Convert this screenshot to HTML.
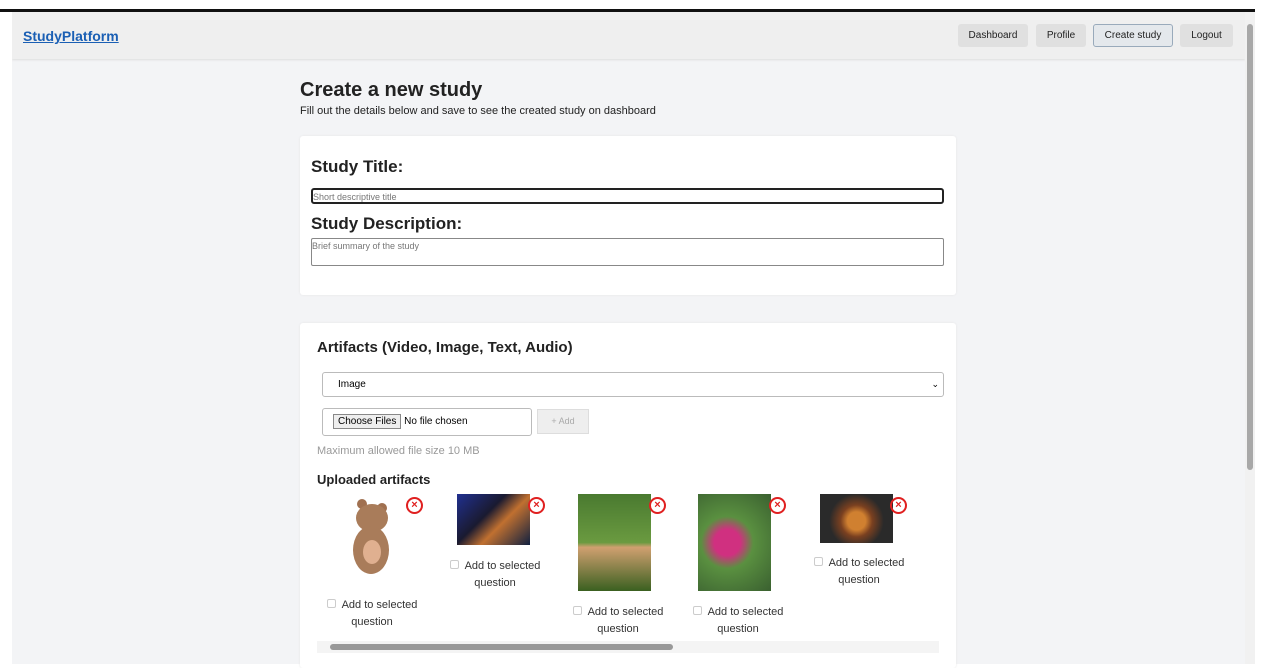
<!DOCTYPE html>
<html><head><style>
*{box-sizing:border-box;margin:0;padding:0}
body{width:1278px;height:668px;background:#fff;font-family:"Liberation Sans",sans-serif;position:relative;overflow:hidden}
.top{position:absolute;left:0;top:9px;width:1255px;height:3px;background:#111}
.page{position:absolute;left:12px;top:12px;width:1233px;height:652px;background:#f3f4f6;overflow:hidden}
.hdr{position:absolute;left:0;top:0;width:1233px;height:47px;background:#efefef;box-shadow:0 1px 2px #ddd}
.logo{position:absolute;left:11px;top:16px;font-weight:bold;font-size:14px;color:#1a5fb4;text-decoration:underline}
.btn{position:absolute;top:12px;height:23px;background:#e0e0e0;border-radius:3px;font-size:10px;color:#222;text-align:center;line-height:24px}
.sb{position:absolute;left:1245px;top:12px;width:10px;height:652px;background:#f1f1f1}
.thumb{position:absolute;left:1247px;top:24px;width:6px;height:446px;background:#a8a8a8;border-radius:3px}
.card{position:absolute;background:#fff;border-radius:3px;box-shadow:0 0 2px #e5e5e5}
.img{position:absolute;}
.x{position:absolute;width:17px;height:17px;border:2px solid #e02020;border-radius:50%;color:#e02020;font-size:11px;font-weight:bold;text-align:center;line-height:13px}
.cap{position:absolute;font-size:11px;color:#333;text-align:center;width:110px;line-height:17px}
.cb{display:inline-block;width:9px;height:9px;border:1px solid #ccc;border-radius:2px;margin-right:6px}
</style></head><body>
<div class="top"></div>
<div class="page">
<div class="hdr">
<div class="logo">StudyPlatform</div>
<div class="btn" style="left:946px;width:70px">Dashboard</div>
<div class="btn" style="left:1024px;width:50px">Profile</div>
<div class="btn" style="left:1081px;width:80px;border:1px solid #9ab;background:#e4e8ec;line-height:22px">Create study</div>
<div class="btn" style="left:1168px;width:53px">Logout</div>
</div>
</div>
<div style="position:absolute;left:300px;top:79px;font-size:20px;font-weight:bold;color:#222">Create a new study</div>
<div style="position:absolute;left:300px;top:105px;font-size:11px;color:#222">Fill out the details below and save to see the created study on dashboard</div>
<div class="card" style="left:300px;top:136px;width:656px;height:159px">
<div style="position:absolute;left:11px;top:21px;font-size:17px;font-weight:bold;color:#222">Study Title:</div>
<div style="position:absolute;left:11px;top:52px;width:633px;height:16px;border:2px solid #222;border-radius:3px;font-size:9px;color:#777;line-height:14px">Short descriptive title</div>
<div style="position:absolute;left:11px;top:78px;font-size:17px;font-weight:bold;color:#222">Study Description:</div>
<div style="position:absolute;left:11px;top:102px;width:633px;height:28px;border:1px solid #888;border-radius:2px;font-size:9px;color:#777;line-height:14px">Brief summary of the study</div>
</div>
<div class="card" style="left:300px;top:323px;width:656px;height:345px">
<div style="position:absolute;left:17px;top:16px;font-size:15px;font-weight:bold;color:#222">Artifacts (Video, Image, Text, Audio)</div>
<div style="position:absolute;left:22px;top:49px;width:622px;height:25px;border:1px solid #bbb;border-radius:3px;font-size:10px;padding-left:15px;line-height:23px">Image<span style="position:absolute;right:4px;font-size:9px">&#8964;</span></div>
<div style="position:absolute;left:22px;top:85px;width:210px;height:28px;border:1px solid #bbb;border-radius:3px;font-size:10px;line-height:26px;padding-left:10px"><span style="border:1px solid #888;background:#eee;padding:1px 4px">Choose Files</span> No file chosen</div>
<div style="position:absolute;left:237px;top:86px;width:52px;height:25px;background:#eee;border:1px solid #ddd;font-size:9px;color:#aaa;text-align:center;line-height:23px">+ Add</div>
<div style="position:absolute;left:17px;top:122px;font-size:11px;color:#999">Maximum allowed file size 10 MB</div>
<div style="position:absolute;left:17px;top:149px;font-size:13px;font-weight:bold;color:#222">Uploaded artifacts</div>
<svg class="img" style="left:45px;top:175px" width="55" height="82"><circle cx="17" cy="6" r="5" fill="#a07050"/><circle cx="37" cy="10" r="5" fill="#a07050"/><ellipse cx="27" cy="20" rx="16" ry="14" fill="#a97c5a"/><ellipse cx="26" cy="52" rx="18" ry="24" fill="#a97c5a"/><ellipse cx="27" cy="54" rx="9" ry="12" fill="#e0b090"/></svg>
<div class="x" style="left:106px;top:174px">×</div>
<div class="cap" style="left:17px;top:274px"><span class="cb"></span>Add to selected question</div>
<div class="img" style="left:157px;top:171px;width:73px;height:51px;background:linear-gradient(135deg,#203090,#1a1a30 40%,#c07030 60%,#102040)"></div>
<div class="x" style="left:228px;top:174px">×</div>
<div class="cap" style="left:140px;top:235px"><span class="cb"></span>Add to selected question</div>
<div class="img" style="left:278px;top:171px;width:73px;height:97px;background:linear-gradient(#4a7a30,#6a9a40 50%,#d0a070 55%,#3a6020)"></div>
<div class="x" style="left:349px;top:174px">×</div>
<div class="cap" style="left:263px;top:281px"><span class="cb"></span>Add to selected question</div>
<div class="img" style="left:398px;top:171px;width:73px;height:97px;background:radial-gradient(circle at 40% 50%,#d03080 20%,#5a9040 40%,#3a6030)"></div>
<div class="x" style="left:469px;top:174px">×</div>
<div class="cap" style="left:383px;top:281px"><span class="cb"></span>Add to selected question</div>
<div class="img" style="left:520px;top:171px;width:73px;height:49px;background:radial-gradient(circle at 50% 55%,#d08030 20%,#7a4020 35%,#2a2a2a 60%)"></div>
<div class="x" style="left:590px;top:174px">×</div>
<div class="cap" style="left:504px;top:232px"><span class="cb"></span>Add to selected question</div>
<div style="position:absolute;left:17px;top:318px;width:622px;height:12px;background:#f4f4f4"><div style="position:absolute;left:13px;top:3px;width:343px;height:6px;background:#999;border-radius:3px"></div></div>
</div>
<div class="sb"></div><div class="thumb"></div>
</body></html>
